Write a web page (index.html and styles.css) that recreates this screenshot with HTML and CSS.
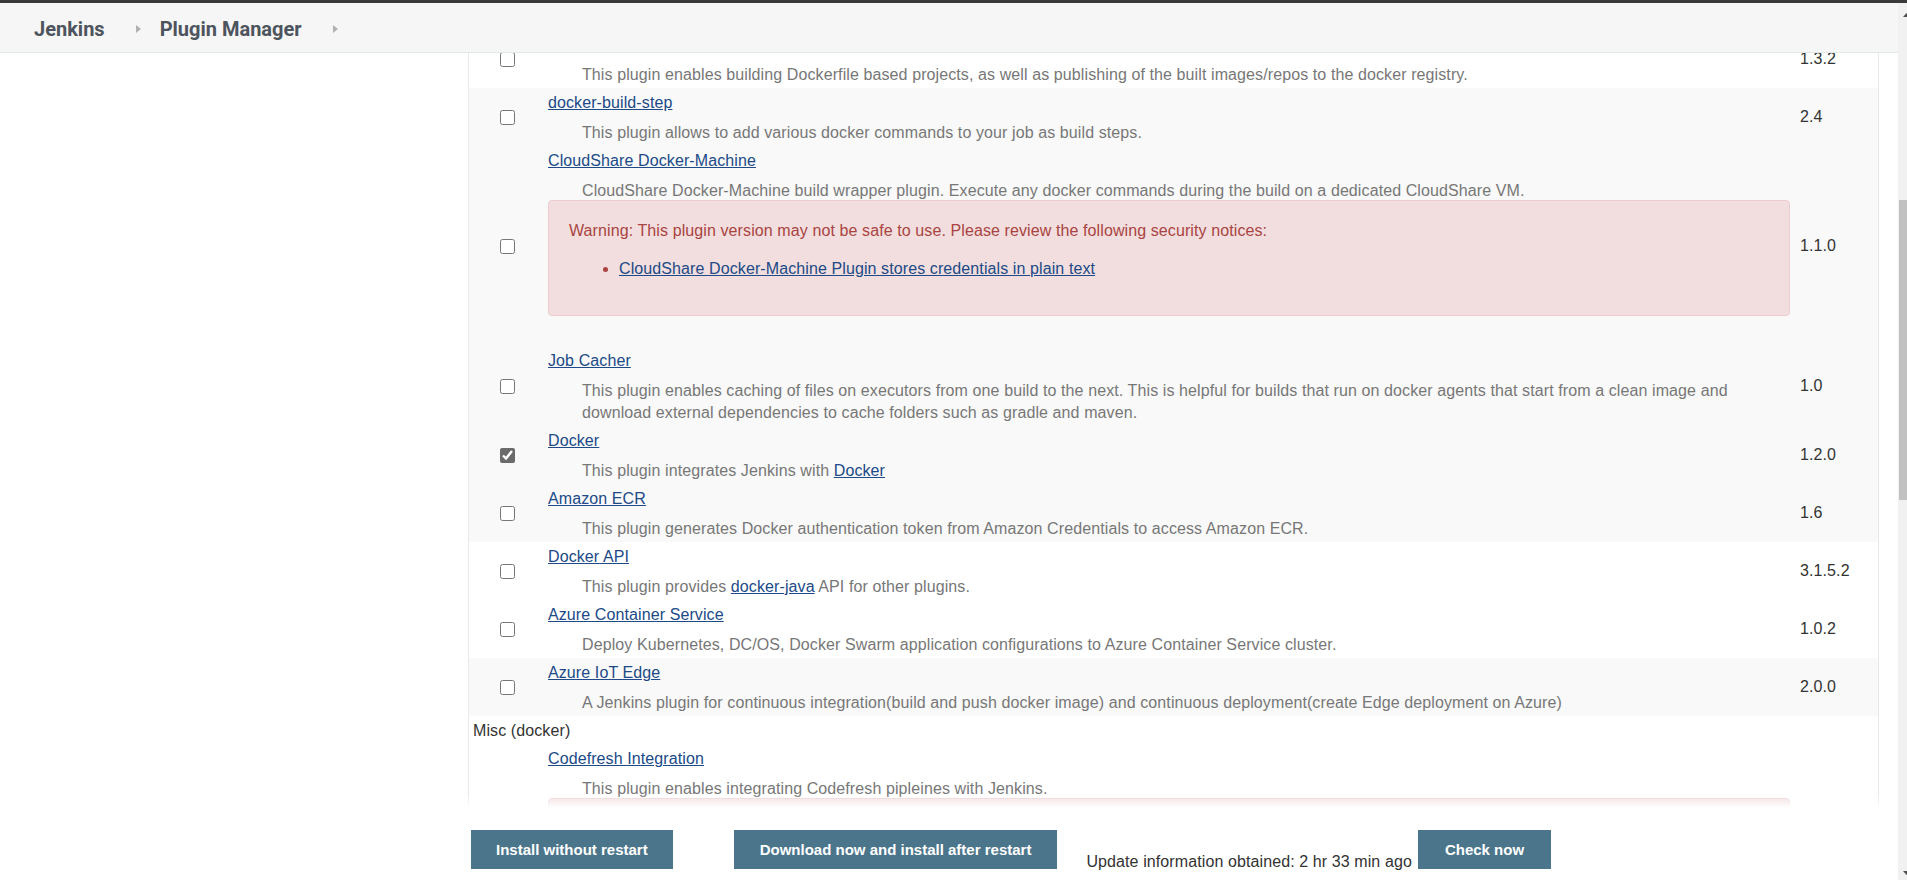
FILE: index.html
```html
<!DOCTYPE html>
<html lang="en">
<head>
<meta charset="utf-8">
<title>Update Center [Jenkins]</title>
<link rel="stylesheet" href="styles.css">
</head>
<body>
<div class="topline"></div>
<div class="frame">
  <div class="page">
    <nav class="breadcrumbs">
      <a class="crumb" href="#">Jenkins</a>
      <svg class="chev" viewBox="0 0 5 8"><path d="M0 0 L5 4 L0 8 Z"/></svg>
      <a class="crumb" href="#">Plugin Manager</a>
      <svg class="chev" viewBox="0 0 5 8"><path d="M0 0 L5 4 L0 8 Z"/></svg>
    </nav>
    <div class="content">
      <div class="side-panel"></div>
      <div class="main-panel">
        <div class="plugin-list">
          <div class="row">
            <div class="cell-check"><input type="checkbox"></div>
            <div class="cell-details">
              <div class="name"><a href="#">CloudBees Docker Build and Publish</a></div>
              <div class="excerpt">This plugin enables building Dockerfile based projects, as well as publishing of the built images/repos to the docker registry.</div>
            </div>
            <div class="cell-version">1.3.2</div>
          </div>
          <div class="row shaded">
            <div class="cell-check"><input type="checkbox"></div>
            <div class="cell-details">
              <div class="name"><a href="#">docker-build-step</a></div>
              <div class="excerpt">This plugin allows to add various docker commands to your job as build steps.</div>
            </div>
            <div class="cell-version">2.4</div>
          </div>
          <div class="row shaded">
            <div class="cell-check"><input type="checkbox"></div>
            <div class="cell-details">
              <div class="name"><a href="#">CloudShare Docker-Machine</a></div>
              <div class="excerpt">CloudShare Docker-Machine build wrapper plugin. Execute any docker commands during the build on a dedicated CloudShare VM.</div>
              <div class="alert">
                <p>Warning: This plugin version may not be safe to use. Please review the following security notices:</p>
                <ul>
                  <li><a href="#">CloudShare Docker-Machine Plugin stores credentials in plain text</a></li>
                </ul>
              </div>
            </div>
            <div class="cell-version">1.1.0</div>
          </div>
          <div class="row shaded">
            <div class="cell-check"><input type="checkbox"></div>
            <div class="cell-details">
              <div class="name"><a href="#">Job Cacher</a></div>
              <div class="excerpt">This plugin enables caching of files on executors from one build to the next. This is helpful for builds that run on docker agents that start from a clean image and download external dependencies to cache folders such as gradle and maven.</div>
            </div>
            <div class="cell-version">1.0</div>
          </div>
          <div class="row shaded">
            <div class="cell-check"><input type="checkbox" checked></div>
            <div class="cell-details">
              <div class="name"><a href="#">Docker</a></div>
              <div class="excerpt">This plugin integrates Jenkins with <a href="#">Docker</a></div>
            </div>
            <div class="cell-version">1.2.0</div>
          </div>
          <div class="row shaded">
            <div class="cell-check"><input type="checkbox"></div>
            <div class="cell-details">
              <div class="name"><a href="#">Amazon ECR</a></div>
              <div class="excerpt">This plugin generates Docker authentication token from Amazon Credentials to access Amazon ECR.</div>
            </div>
            <div class="cell-version">1.6</div>
          </div>
          <div class="row">
            <div class="cell-check"><input type="checkbox"></div>
            <div class="cell-details">
              <div class="name"><a href="#">Docker API</a></div>
              <div class="excerpt">This plugin provides <a href="#">docker-java</a> API for other plugins.</div>
            </div>
            <div class="cell-version">3.1.5.2</div>
          </div>
          <div class="row">
            <div class="cell-check"><input type="checkbox"></div>
            <div class="cell-details">
              <div class="name"><a href="#">Azure Container Service</a></div>
              <div class="excerpt">Deploy Kubernetes, DC/OS, Docker Swarm application configurations to Azure Container Service cluster.</div>
            </div>
            <div class="cell-version">1.0.2</div>
          </div>
          <div class="row shaded">
            <div class="cell-check"><input type="checkbox"></div>
            <div class="cell-details">
              <div class="name"><a href="#">Azure IoT Edge</a></div>
              <div class="excerpt">A Jenkins plugin for continuous integration(build and push docker image) and continuous deployment(create Edge deployment on Azure)</div>
            </div>
            <div class="cell-version">2.0.0</div>
          </div>
          <div class="category">Misc (docker)</div>
          <div class="row">
            <div class="cell-check"><input type="checkbox"></div>
            <div class="cell-details">
              <div class="name"><a href="#">Codefresh Integration</a></div>
              <div class="excerpt">This plugin enables integrating Codefresh pipleines with Jenkins.</div>
              <div class="alert">
                <p>Warning: This plugin version may not be safe to use. Please review the following security notices:</p>
                <ul>
                  <li><a href="#">Codefresh Integration Plugin disables SSL/TLS certificate validation</a></li>
                </ul>
              </div>
            </div>
            <div class="cell-version">1.8</div>
          </div>
        </div>
      </div>
    </div>
    <div class="bottom-bar">
      <button class="btn btn-install">Install without restart</button>
      <button class="btn btn-download">Download now and install after restart</button>
      <span class="update-info">Update information obtained: 2 hr 33 min ago</span>
      <button class="btn btn-check">Check now</button>
    </div>
  </div>
  <div class="scrollbar">
    <div class="scrollbar-inner">
      <div class="sb-btn sb-up"><svg viewBox="0 0 7 4"><path d="M0 4 L3.5 0 L7 4 Z"/></svg></div>
      <div class="sb-track"><div class="sb-thumb"></div></div>
      <div class="sb-btn sb-down"><svg viewBox="0 0 7 4"><path d="M0 0 L7 0 L3.5 4 Z"/></svg></div>
    </div>
  </div>
</div>
</body>
</html>
```
FILE: styles.css
```css
* { box-sizing: border-box; }

html, body {
  margin: 0;
  height: 100%;
}

body {
  font-family: "Liberation Sans", Arial, sans-serif;
  font-size: 16px;
  color: #333;
  background: #fff;
  overflow: hidden;
}

.topline {
  height: 3px;
  background: #3a3a3a;
}

.frame {
  display: flex;
  height: 877px;
}

.page {
  flex: 1;
  min-width: 0;
  display: flex;
  flex-direction: column;
}

/* breadcrumbs */
.breadcrumbs {
  flex: none;
  height: 50px;
  display: flex;
  align-items: center;
  padding: 2px 0 0 34px;
  background: #f6f6f6;
  border-bottom: 1px solid #e1e8e8;
  font-family: Roboto, "Noto Sans", sans-serif;
  font-weight: 700;
  font-size: 20px;
  color: #4d545d;
}

.crumb {
  color: inherit;
  text-decoration: none;
}

.chev {
  width: 5px;
  height: 8px;
  margin: 0 19px 0 31px;
  fill: #b0b0b0;
}

/* content */
.content {
  flex: 1;
  min-height: 0;
  display: flex;
}

.side-panel {
  flex: none;
  width: 468px;
}

.main-panel {
  flex: 1;
  min-width: 0;
  margin-right: 19px;
  border-left: 1px solid #e6eaec;
  border-right: 1px solid #e6eaec;
  overflow: hidden;
  letter-spacing: 0.1px;
}

.plugin-list {
  margin-top: -23px;
}

.row {
  display: grid;
  grid-template-columns: 76px 1fr 83px;
  align-items: center;
}

.row.shaded {
  background: #f9f9f9;
}

.cell-check {
  display: flex;
  justify-content: center;
}

.cell-check input {
  width: 15px;
  height: 15px;
  margin: 0;
  accent-color: #6b6b6b;
}

.cell-details {
  align-self: stretch;
  padding: 5px 5px 2px 3px;
}

.name {
  line-height: 20px;
}

a {
  color: #204a87;
  text-decoration: underline;
}

.excerpt {
  margin-top: 9px;
  padding-left: 34px;
  line-height: 22px;
  color: #777;
}

.cell-version {
  padding-left: 5px;
  color: #333;
}

.alert {
  margin: -2px 0 28px;
  padding: 19px 20px;
  border: 1px solid #ebccd1;
  border-radius: 4px;
  background: #f2dede;
  color: #a94442;
  line-height: 22px;
}

.alert p {
  margin: 0;
}

.alert ul {
  margin: 16px 0;
  padding-left: 50px;
}

.category {
  height: 28px;
  padding: 2px 0 0 4px;
  line-height: 26px;
  color: #333;
}

/* bottom bar */
.bottom-bar {
  flex: none;
  position: relative;
  height: 72px;
  display: flex;
  align-items: flex-end;
  padding: 0 0 11px 471px;
  background: #fff;
}

.bottom-bar::before {
  content: "";
  position: absolute;
  left: 0;
  right: 0;
  top: -14px;
  height: 14px;
  background: linear-gradient(rgba(255, 255, 255, 0), #fff);
}

.btn {
  height: 39px;
  padding: 0 25px;
  border: none;
  background: #4b758b;
  color: #fff;
  font-family: "Liberation Sans", Arial, sans-serif;
  font-weight: 700;
  font-size: 15px;
}

.btn-install {
  margin-right: 61px;
}

.btn-download {
  padding: 0 26px;
}

.btn-check {
  padding: 0 27px;
}

.update-info {
  margin: 0 6px -2px 29px;
  line-height: 18px;
  letter-spacing: 0.1px;
  color: #333;
}

/* fake scrollbar */
.scrollbar {
  flex: none;
  width: 9px;
  overflow: hidden;
  background: #f1f1f1;
}

.scrollbar-inner {
  width: 17px;
  height: 100%;
  display: flex;
  flex-direction: column;
}

.sb-btn {
  flex: none;
  display: flex;
  align-items: center;
  justify-content: center;
}

.sb-btn svg {
  width: 7px;
  height: 4px;
  fill: #505050;
}

.sb-up {
  height: 24px;
}

.sb-down {
  height: 14px;
}

.sb-track {
  flex: 1;
}

.sb-thumb {
  margin: 173px 0 0 1px;
  width: 14px;
  height: 300px;
  background: #c1c1c1;
}
```
